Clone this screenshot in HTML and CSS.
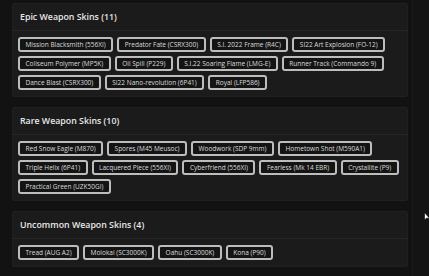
FILE: index.html
```html
<!DOCTYPE html>
<html>
	<head>
		<meta charset="UTF-8">
		<title>Weapon Skins</title>
		<link rel="stylesheet" href="styles.css">
	</head>
	<body>
		<div class="page">
			<div class="content">
				<div class="card">
					<div class="card-head">Epic Weapon Skins (11)</div>
					<ul class="tags">
						<li class="tag">Mission Blacksmith (556XI)</li>
						<li class="tag">Predator Fate (CSRX300)</li>
						<li class="tag">S.I. 2022 Frame (R4C)</li>
						<li class="tag">SI22 Art Explosion (FO-12)</li>
						<li class="tag">Coliseum Polymer (MP5K)</li>
						<li class="tag">Oil Spill (P229)</li>
						<li class="tag">S.I.22 Soaring Flame (LMG-E)</li>
						<li class="tag">Runner Track (Commando 9)</li>
						<li class="tag">Dance Blast (CSRX300)</li>
						<li class="tag">SI22 Nano-revolution (6P41)</li>
						<li class="tag">Royal (LFP586)</li>
					</ul>
				</div>
				<div class="card">
					<div class="card-head">Rare Weapon Skins (10)</div>
					<ul class="tags">
						<li class="tag">Red Snow Eagle (M870)</li>
						<li class="tag">Spores (M45 Meusoc)</li>
						<li class="tag">Woodwork (SDP 9mm)</li>
						<li class="tag">Hometown Shot (M590A1)</li>
						<li class="tag">Triple Helix (6P41)</li>
						<li class="tag">Lacquered Piece (556XI)</li>
						<li class="tag">Cyberfriend (556XI)</li>
						<li class="tag">Fearless (Mk 14 EBR)</li>
						<li class="tag">Crystallite (P9)</li>
						<li class="tag">Practical Green (UZK50GI)</li>
					</ul>
				</div>
				<div class="card">
					<div class="card-head">Uncommon Weapon Skins (4)</div>
					<ul class="tags">
						<li class="tag">Tread (AUG A2)</li>
						<li class="tag">Molokai (SC3000K)</li>
						<li class="tag">Oahu (SC3000K)</li>
						<li class="tag">Kona (P90)</li>
					</ul>
				</div>
			</div>
			<div class="side"></div>
		</div>
		<svg class="cursor" width="6" height="9" viewBox="0 0 6 9">
			<path d="M0.5 0.5 L0.5 8 L2.3 6.2 L5.5 6.2 Z" fill="#fff" stroke="#000" stroke-width="0.6"/>
		</svg>
	</body>
</html>
```

FILE: styles.css
```css
* {
	margin:0;
	padding:0;
	box-sizing:border-box;
}
li {
	list-style:none;
}
body {
	background:#121212;
	font-family:"Open Sans","Liberation Sans",sans-serif;
	color:#e6e6e6;
	height:276px;
	overflow:hidden;
}
.page {
	display:flex;
	height:276px;
}
	.content {
		width:413px;
		padding:3px 4px 0 12px;
		display:flex;
		flex-direction:column;
		gap:10px;
		border-right:1px solid #1a1a1a;
	}
		.card {
			background:#1b1b1b;
			border:1px solid #202020;
			border-radius:2px;
		}
			.card-head {
				height:27px;
				display:flex;
				align-items:center;
				padding:0 7px;
				font-size:8.8px;
				font-weight:600;
				color:#e8e8e8;
				border-bottom:1px solid #262626;
			}
			.tags {
				display:flex;
				flex-wrap:wrap;
				gap:4px;
				padding:6px 5px 6px;
			}
				.tag {
					height:15px;
					display:flex;
					align-items:center;
					padding:0 5.5px;
					font-size:6.5px;
					font-weight:500;
					color:#dcdcdc;
					background:#141414;
					border:2px solid #bdbdbd;
					border-radius:3px;
					white-space:nowrap;
				}
	.side {
		flex:1;
		background:#141414;
	}
.cursor {
	position:absolute;
	left:424px;
	top:212px;
}
```
